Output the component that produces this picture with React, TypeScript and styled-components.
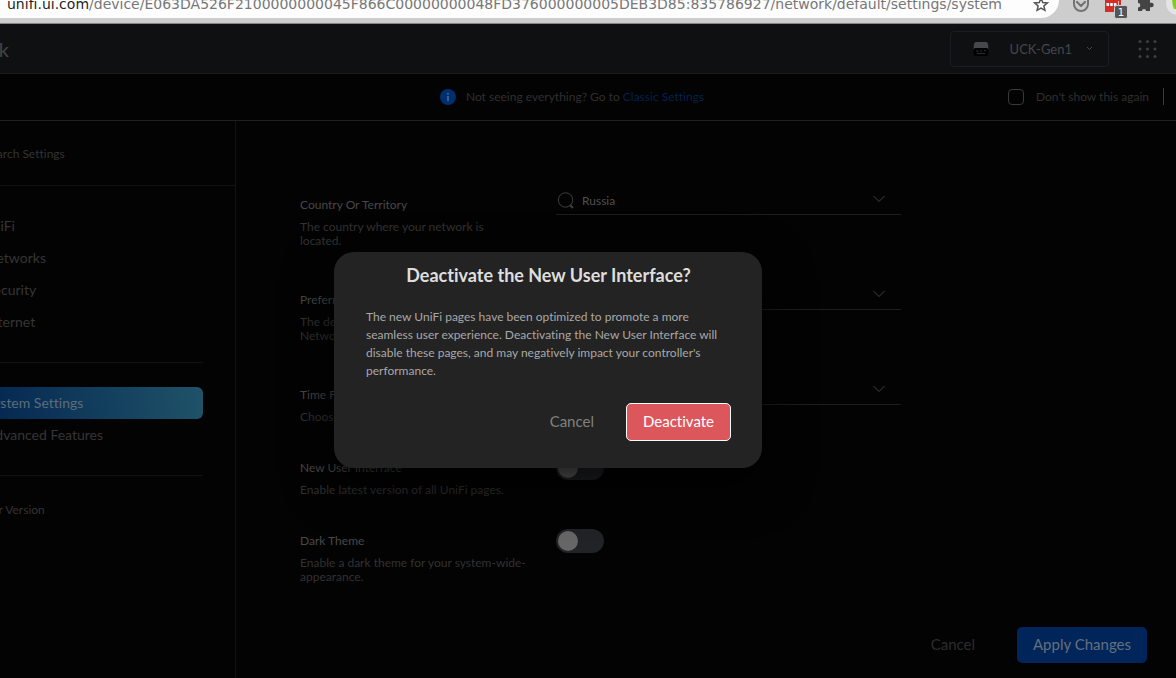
import React from "react";
import styled, { createGlobalStyle } from "styled-components";

const GlobalStyle = createGlobalStyle`
  *, *::before, *::after { box-sizing: border-box; }
  body {
    margin: 0;
    background: #030303;
    overflow: hidden;
    font-family: Lato, "Liberation Sans", sans-serif;
    font-variant-ligatures: none;
  }
  button, input, select { font-family: inherit; font-variant-ligatures: none; }
  h1, h2, p { margin: 0; }
`;

const Window = styled.div`
  display: flex;
  flex-direction: column;
  min-height: 100vh;
`;

/* Browser toolbar */
const BrowserBar = styled.div`
  display: flex;
  height: 24px;
  background: #cdcdcd;
  border-bottom: 1px solid #858585;
  overflow: hidden;
`;

const AddressBar = styled.div`
  display: flex;
  flex: 1;
  min-width: 0;
  align-items: flex-end;
  justify-content: space-between;
  height: 18px;
  padding: 0 10px 0 7px;
  background: #fdfdfd;
  border-bottom-right-radius: 18px;
`;

const Url = styled.span`
  height: 24px;
  font-family: "DejaVu Sans", sans-serif;
  font-size: 14px;
  line-height: 20px;
  white-space: nowrap;
  color: #777;
`;

const Host = styled.span`
  color: #1f1f1f;
`;

const Extensions = styled.div`
  width: 117px;
  height: 23px;
  flex: none;
`;

/* Application frame, scrolled sideways by the width of the hidden rail */
const Page = styled.div`
  position: relative;
  display: flex;
  flex: 1;
  flex-direction: column;
  margin-left: -80px;
`;

const Header = styled.header`
  display: flex;
  align-items: center;
  height: 50px;
  padding: 0 19px 0 12px;
  background: #0f1012;
  border-bottom: 1px solid #1a1b1d;
`;

const Title = styled.h1`
  flex: 1;
  font-size: 20px;
  font-weight: 400;
  color: #434446;
`;

const ConsoleButton = styled.button`
  display: flex;
  align-items: center;
  width: 159px;
  height: 36px;
  margin-right: 29px;
  padding: 0 15px 0 22px;
  background: transparent;
  border: 1px solid #1c1d20;
  border-radius: 4px;
  font-size: 13px;
  color: #46474a;
`;

const ConsoleName = styled.span`
  flex: 1;
  padding-right: 14px;
  text-align: right;
`;

const AppsButton = styled.button`
  display: flex;
  padding: 0;
  background: none;
  border: 0;
`;

const Banner = styled.div`
  display: flex;
  align-items: center;
  height: 47px;
  padding: 0 12px 1px 216px;
  border-bottom: 1px solid #1f1f1f;
  font-size: 12px;
  color: #2f2f30;
`;

const BannerMessage = styled.p`
  display: flex;
  flex: 1;
  align-items: center;
  justify-content: center;
  gap: 10px;
`;

const BannerLink = styled.a`
  color: #00224f;
  text-decoration: none;
`;

const DismissLabel = styled.label`
  display: flex;
  align-items: center;
  gap: 12px;
  padding-right: 14px;
`;

const TickBox = styled.input`
  appearance: none;
  width: 16px;
  height: 16px;
  margin: 0;
  border: 1px solid #38393b;
  border-radius: 4px;
`;

const BannerDivider = styled.span`
  width: 1px;
  height: 17px;
  background: #38393b;
`;

const Body = styled.div`
  display: flex;
  flex: 1;
`;

/* Sidebar */
const Sidebar = styled.nav`
  flex: none;
  width: 316px;
  border-right: 1px solid #121213;
`;

const SearchBox = styled.div`
  display: flex;
  align-items: center;
  height: 65px;
  padding-left: 64px;
  border-bottom: 1px solid #121213;
`;

const SearchInput = styled.input`
  width: 200px;
  padding: 0;
  background: transparent;
  border: 0;
  font-size: 12px;
  color: #333;
  &::placeholder { color: #333; opacity: 1; }
`;

const NavGroup = styled.div`
  margin: 0 32px;
  padding: 24px 0;
  border-bottom: 1px solid #121213;
`;

const NavLink = styled.a<{ $active?: boolean }>`
  display: block;
  height: 32px;
  padding-left: 34px;
  border-radius: 6px;
  font-size: 14px;
  line-height: 32px;
  text-decoration: none;
  color: ${(p) => (p.$active ? "#5d6d78" : "#353535")};
  background: ${(p) => (p.$active ? "linear-gradient(80deg, #001f4d, #1f5368)" : "transparent")};
`;

const Version = styled.p`
  padding: 25px 0 0 30px;
  font-size: 12px;
  line-height: 18px;
  color: #333;
`;

/* Settings form */
const Main = styled.main`
  display: flex;
  flex: 1;
  flex-direction: column;
  padding: 66px 29px 15px 64px;
`;

const SettingRow = styled.div<{ $tall?: boolean }>`
  display: grid;
  grid-template-columns: 256px minmax(0, 345px);
  align-items: start;
  min-height: ${(p) => (p.$tall ? 95 : 73)}px;
`;

const SettingText = styled.div`
  width: 232px;
  padding-top: 6px;
  font-size: 12px;
`;

const SettingLabel = styled.label`
  display: block;
  margin-bottom: 3px;
  line-height: 24px;
  color: #484848;
`;

const SettingHint = styled.p<{ $narrow?: boolean }>`
  max-width: ${(p) => (p.$narrow ? 200 : 232)}px;
  line-height: 14px;
  color: #323232;
`;

const Field = styled.div`
  display: flex;
  align-items: center;
  gap: 8px;
  height: 28px;
  padding-right: 16px;
  border-bottom: 1px solid #1d1d1e;
  color: #404041;
`;

const Picker = styled.select`
  appearance: none;
  flex: 1;
  padding: 0;
  background: transparent;
  border: 0;
  font-size: 12px;
  color: #505050;
`;

const Toggle = styled.input`
  appearance: none;
  display: flex;
  width: 48px;
  height: 24px;
  margin: 6px 0 0;
  padding: 2px;
  border-radius: 12px;
  background: #222327;
  &::before {
    content: "";
    width: 20px;
    height: 20px;
    border-radius: 50%;
    background: #666;
  }
`;

const Actions = styled.div`
  display: flex;
  align-items: center;
  justify-content: flex-end;
  gap: 26px;
  margin-top: auto;
`;

const Button = styled.button<{ $kind: "plain" | "quiet" | "primary" | "danger" }>`
  height: ${(p) => (p.$kind === "danger" ? 38 : 36)}px;
  padding: 0 ${(p) => (p.$kind === "danger" ? 16 : 15)}px 2px;
  border: 1px solid ${(p) => (p.$kind === "danger" ? "#fff" : "transparent")};
  border-radius: 5px;
  font-size: 15px;
  background: ${(p) => ({ plain: "transparent", quiet: "transparent", primary: "#00255a", danger: "#dc575c" })[p.$kind]};
  color: ${(p) => ({ plain: "#2c2c2c", quiet: "#808080", primary: "#66707c", danger: "#fff" })[p.$kind]};
`;

/* Confirmation dialog */
const Overlay = styled.div`
  position: absolute;
  inset: 0 0 -18px;
  display: flex;
  align-items: center;
  justify-content: center;
`;

const Dialog = styled.section`
  width: 428px;
  padding: 12px 31px 27px 32px;
  border-radius: 20px;
  background: #232323;
  box-shadow: 0 16px 48px rgba(0, 0, 0, 0.8);
`;

const DialogTitle = styled.h2`
  margin-bottom: 22px;
  font-size: 18px;
  font-weight: 700;
  line-height: 22px;
  text-align: center;
  color: #dedede;
`;

const DialogText = styled.p`
  margin-bottom: 23px;
  font-size: 12px;
  line-height: 18px;
  color: #a8a8a8;
`;

const DialogActions = styled.div`
  display: flex;
  align-items: center;
  justify-content: flex-end;
  gap: 16px;
`;

const Chevron = () => (
  <svg width="12" height="12" viewBox="0 0 12 12" fill="none" stroke="currentColor" aria-hidden="true">
    <path d="M.5 1 6 6.500 11.500 1" />
  </svg>
);

const dots = [1.5, 9, 16.500];

export default function App() {
  return (
    <Window>
      <GlobalStyle />
      <BrowserBar>
        <AddressBar>
          <Url>
            <Host>unifi.ui.com</Host>
            /device/E063DA526F2100000000045F866C00000000048FD376000000005DEB3D85:835786927/network/default/settings/system
          </Url>
          <svg width="16" height="18" viewBox="0 0 16 18" fill="none" stroke="#555" strokeWidth="1.500" aria-hidden="true">
            <path d="m8-1.500 1.800 4 4.500.4-3.400 3 1 4.400L8 8l-3.900 2.300 1-4.400-3.400-3 4.500-.4Z" />
          </svg>
        </AddressBar>
        <Extensions>
          <svg width="117" height="23" viewBox="0 0 117 23" aria-hidden="true">
            <path d="M15-2v6a7 7 0 0 0 14 0v-6" fill="none" stroke="#737373" strokeWidth="2" />
            <path d="m18 2 4 4 4-4" fill="none" stroke="#737373" strokeWidth="2.200" strokeLinecap="round" strokeLinejoin="round" />
            <path d="M46-3h16v15H46Z" fill="#d32d27" />
            <g fill="#fff">
              <rect x="47.500" y="3" width="2.600" height="3" rx=".6" />
              <rect x="51.200" y="3" width="2.600" height="3" rx=".6" />
              <rect x="54.900" y="3" width="2.600" height="3" rx=".6" />
              <path d="M59 1h1v5h-1z" opacity=".6" />
            </g>
            <rect x="55.500" y="5.500" width="13" height="13" rx="2" fill="#555" stroke="#cdcdcd" />
            <text x="62" y="16" fontFamily="DejaVu Sans, sans-serif" fontSize="10" fill="#fff" textAnchor="middle">1</text>
            <path d="M79 0h4v-3h4v3h4v2.800h1.500a2.200 2.200 0 0 1 0 4.400H91V11h-4a2 2 0 0 0-4 0h-4V7.500a2.300 2.300 0 0 0 0-4.600Z" fill="#444" />
            <circle cx="119" cy="3" r="12" fill="#e4e4e4" />
            <path d="M113-2h6v15h-2v-4h-2q-2-5-2-11Z" fill="#7ccf1c" />
          </svg>
        </Extensions>
      </BrowserBar>

      <Page>
        <Header>
          <Title>Network</Title>
          <ConsoleButton type="button">
            <svg width="16" height="16" viewBox="0 0 16 16" aria-hidden="true">
              <path d="M3 1h10q1.500 0 2 2l.5 5H.5L1 3q.5-2 2-2Z" fill="#46494c" />
              <rect x=".5" y="7" width="15" height="8" rx="2" fill="#020202" />
              <path d="M3 10h3M7 10h2M11 9.500h2M4 12.500h8" stroke="#2a2c30" />
            </svg>
            <ConsoleName>UCK-Gen1</ConsoleName>
            <svg width="7" height="5" viewBox="0 0 7 5" fill="none" stroke="currentColor" aria-hidden="true">
              <path d="m1 1 2.500 2.500L6 1" />
            </svg>
          </ConsoleButton>
          <AppsButton type="button" aria-label="Applications">
            <svg width="19" height="18" viewBox="0 0 19 18" fill="#3e3f42" aria-hidden="true">
              {dots.map((y) => dots.map((x) => <circle key={`${x}-${y}`} cx={x + 0.5} cy={y} r="1.500" />))}
            </svg>
          </AppsButton>
        </Header>

        <Banner>
          <BannerMessage>
            <svg width="16" height="16" viewBox="0 0 16 16" aria-hidden="true">
              <circle cx="8" cy="8" r="8" fill="#002f70" />
              <path d="M8 7v5M8 4v1.500" stroke="#65809f" strokeWidth="1.200" />
            </svg>
            <span>
              Not seeing everything? Go to <BannerLink href="#classic">Classic Settings</BannerLink>
            </span>
          </BannerMessage>
          <DismissLabel>
            <TickBox type="checkbox" />
            Don't show this again
          </DismissLabel>
          <BannerDivider />
        </Banner>

        <Body>
          <Sidebar>
            <SearchBox>
              <SearchInput type="search" placeholder="Search Settings" aria-label="Search Settings" />
            </SearchBox>
            <NavGroup>
              <NavLink href="#wifi">WiFi</NavLink>
              <NavLink href="#networks">Networks</NavLink>
              <NavLink href="#security">Security</NavLink>
              <NavLink href="#internet">Internet</NavLink>
            </NavGroup>
            <NavGroup>
              <NavLink href="#system" $active>System Settings</NavLink>
              <NavLink href="#advanced">Advanced Features</NavLink>
            </NavGroup>
            <Version>Controller Version</Version>
          </Sidebar>

          <Main>
            <SettingRow $tall>
              <SettingText>
                <SettingLabel htmlFor="country">Country Or Territory</SettingLabel>
                <SettingHint $narrow>The country where your network is located.</SettingHint>
              </SettingText>
              <Field>
                <svg width="18" height="18" viewBox="0 0 18 18" fill="none" stroke="currentColor" aria-hidden="true">
                  <circle cx="9.500" cy="8" r="7.200" />
                  <path d="m14 13 3 3" strokeWidth="2" />
                </svg>
                <Picker id="country"><option>Russia</option></Picker>
                <Chevron />
              </Field>
            </SettingRow>
            <SettingRow $tall>
              <SettingText>
                <SettingLabel htmlFor="language">Preferred Language</SettingLabel>
                <SettingHint $narrow>The default language for your Network.</SettingHint>
              </SettingText>
              <Field>
                <Picker id="language"><option>English</option></Picker>
                <Chevron />
              </Field>
            </SettingRow>
            <SettingRow>
              <SettingText>
                <SettingLabel htmlFor="time">Time Format</SettingLabel>
                <SettingHint>Choose your time format.</SettingHint>
              </SettingText>
              <Field>
                <Picker id="time"><option>24-hour</option></Picker>
                <Chevron />
              </Field>
            </SettingRow>
            <SettingRow>
              <SettingText>
                <SettingLabel htmlFor="new-ui">New User Interface</SettingLabel>
                <SettingHint>Enable latest version of all UniFi pages.</SettingHint>
              </SettingText>
              <Toggle id="new-ui" type="checkbox" />
            </SettingRow>
            <SettingRow>
              <SettingText>
                <SettingLabel htmlFor="dark">Dark Theme</SettingLabel>
                <SettingHint>Enable a dark theme for your system-wide-appearance.</SettingHint>
              </SettingText>
              <Toggle id="dark" type="checkbox" />
            </SettingRow>
            <Actions>
              <Button type="button" $kind="plain">Cancel</Button>
              <Button type="button" $kind="primary">Apply Changes</Button>
            </Actions>
          </Main>
        </Body>

        <Overlay>
          <Dialog role="dialog" aria-modal="true" aria-labelledby="dialog-title">
            <DialogTitle id="dialog-title">Deactivate the New User Interface?</DialogTitle>
            <DialogText>
              The new UniFi pages have been optimized to promote a more seamless user experience. Deactivating the New
              User Interface will disable these pages, and may negatively impact your controller's performance.
            </DialogText>
            <DialogActions>
              <Button type="button" $kind="quiet">Cancel</Button>
              <Button type="button" $kind="danger">Deactivate</Button>
            </DialogActions>
          </Dialog>
        </Overlay>
      </Page>
    </Window>
  );
}
